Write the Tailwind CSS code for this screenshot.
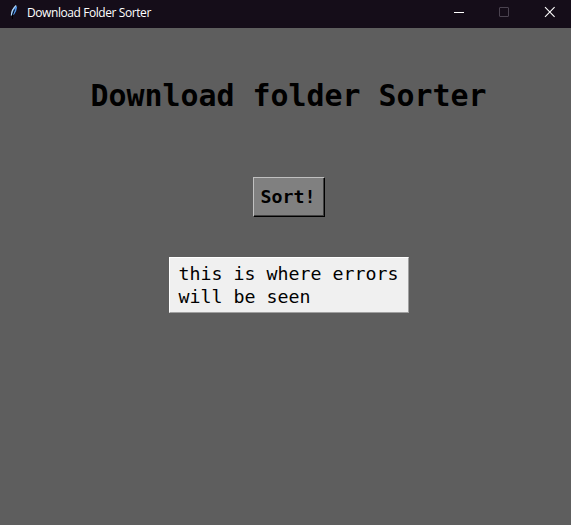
<!DOCTYPE html>
<html lang="en">
<head>
<meta charset="utf-8">
<title>Download Folder Sorter</title>
<script src="https://cdn.jsdelivr.net/npm/@tailwindcss/browser@4"></script>
</head>
<body class="flex h-[525px] w-[571px] flex-col overflow-hidden bg-[#5e5e5e] text-black">
<header class="flex h-7 shrink-0 items-start bg-[#150d19] pl-[9px]">
  <svg class="mt-1 h-4 w-3 shrink-0" viewBox="0 0 12 16">
    <path d="M7.600 1.200C4.500 3 2 7 2.300 12L3.500 11.500C6.800 8.500 7.800 4.500 7.600 1.200Z" fill="#3f7fd8" stroke="#05030a" stroke-width=".6"/>
    <path d="M7.200 1.500C4.300 4 2.400 7.500 2.300 11.500" fill="none" stroke="#bcdcf5" stroke-width="1.100"/>
    <path d="M7.500 2.500C7.300 6 5.800 8.500 4.300 10.500" fill="none" stroke="#4f94ea" stroke-width="1.400"/>
    <path d="M5.500 5.500L3.500 11V15" fill="none" stroke="#000" stroke-width="1"/>
  </svg>
  <span class="ml-[6px] mt-[5px] whitespace-nowrap font-['Open_Sans','Noto_Sans',sans-serif] text-[12px]/[16px] tracking-[-0.42px] text-white">Download Folder Sorter</span>
  <div class="ml-auto flex h-7 shrink-0 items-start">
    <svg class="h-7 w-[45px]" viewBox="0 0 45 28" shape-rendering="crispEdges"><path d="M18 12.500H28" stroke="#fff"/></svg>
    <svg class="h-7 w-[45px]" viewBox="0 0 45 28"><rect x="18.500" y="7.500" width="9" height="9" rx=".5" fill="none" stroke="#4b4350"/></svg>
    <svg class="h-7 w-[45px]" viewBox="0 0 45 28"><path d="M19 7.200L28.600 16.800M28.600 7.200L19 16.800" stroke="#fff" stroke-width="1.100"/></svg>
  </div>
</header>
<main class="flex flex-col items-center pl-[6px] font-['DejaVu_Sans_Mono',monospace]">
  <h1 class="mt-12 h-10 whitespace-pre text-[29.9px]/[40px] font-bold">Download folder Sorter</h1>
  <button class="mt-[61px] flex h-10 w-[72px] items-center justify-center border border-t-[#c0c0c0] border-l-[#c0c0c0] border-r-black border-b-black bg-[#808080] pr-px pb-px text-[18.27px]/[23px] font-bold shadow-[inset_-1px_-1px_0_#404040]">Sort!</button>
  <div class="mt-10 h-14 w-60 whitespace-pre border border-t-white border-l-white border-r-[#a0a0a0] border-b-[#a0a0a0] bg-[#f0f0f0] pt-1 pl-[9px] text-[18.27px]/[23px]">this is where errors
will be seen</div>
</main>
</body>
</html>
